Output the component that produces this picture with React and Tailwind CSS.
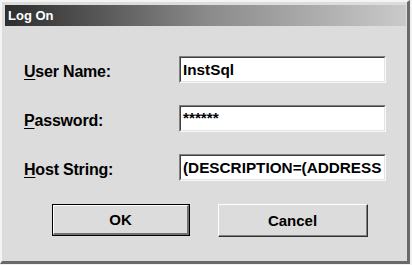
import React from "react";

const font = { fontFamily: '"Liberation Sans", Arial, sans-serif' };

function Field({ label, mnemonic, rest, value, top }) {
  return (
    <div className="flex items-center h-[27px]">
      <div className="w-[156px] text-[16px] font-bold text-black leading-none pl-[1px] pt-[5px] tracking-[-0.2px]">
        <span className="underline underline-offset-2">{mnemonic}</span>
        {rest}
      </div>
      <div className="w-[207px] h-[27px] border-t-[1px] border-l-[1px] border-t-[#808080] border-l-[#808080] border-b-[1px] border-r-[1px] border-b-[#f8f8f8] border-r-[#f8f8f8]">
        <div className="w-full h-full border-t-[1px] border-l-[1px] border-t-[#404040] border-l-[#404040] border-b-[1px] border-r-[1px] border-b-[#e4e4e4] border-r-[#e4e4e4] bg-white overflow-hidden whitespace-nowrap">
          <div
            className={
              "text-[15.3px] font-bold text-black leading-none pl-[2px] " +
              (top ? "pt-[3px]" : "pt-[4px]")
            }
          >
            {value}
          </div>
        </div>
      </div>
    </div>
  );
}

export default function App() {
  return (
    <div
      className="w-[412px] h-[265px] bg-[#f2f2f2] overflow-hidden"
      style={font}
    >
      <div className="w-[410px] h-[264px] border-t-[2px] border-l-[2px] border-[#f4f4f4] border-r-[3px] border-r-[#6a6a6a] border-b-[3px] border-b-[#6a6a6a] bg-[#dcdcdc]">
        <div className="pt-[3px] pl-[3px] pr-[1px]">
          <div className="h-[21px] bg-gradient-to-r from-[#2e2e2e] via-[#8a8a8a] to-[#cacaca] flex items-center pl-[3px]">
            <span className="text-white font-bold text-[13px] leading-none">Log On</span>
          </div>
        </div>
        <div className="pl-[21px] pt-[30px] flex flex-col gap-[22px]">
          <Field mnemonic="U" rest="ser Name:" value="InstSql" />
          <Field mnemonic="P" rest="assword:" value="******" top />
          <Field mnemonic="H" rest="ost String:" value="(DESCRIPTION=(ADDRESS" />
        </div>
        <div className="flex pl-[50px] pt-[23px] gap-[28px]">
          <div className="w-[138px] h-[32px] border border-black">
            <div className="w-full h-full border-t border-l border-t-white border-l-white border-b-[2px] border-r-[2px] border-b-[#707070] border-r-[#707070] flex items-center justify-center text-[15px] font-bold text-black leading-none">
              OK
            </div>
          </div>
          <div className="w-[150px] h-[33px] border-t border-l border-t-white border-l-white border-b border-r border-b-[#303030] border-r-[#303030]">
            <div className="w-full h-full border-b border-r border-b-[#808080] border-r-[#808080] flex items-center justify-center text-[15px] font-bold text-black leading-none">
              Cancel
            </div>
          </div>
        </div>
      </div>
    </div>
  );
}
